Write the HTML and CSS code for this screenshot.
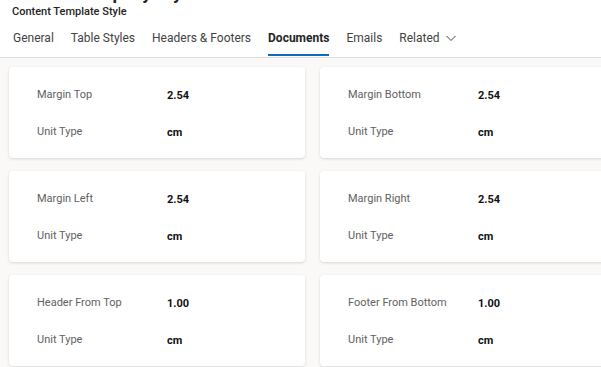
FILE: index.html
```html
<!DOCTYPE html>
<html lang="en">

<head>
    <meta charset="UTF-8">
    <meta name="viewport" content="width=device-width, initial-scale=1.0">
    <title>Content Template Style</title>
    <link rel="stylesheet" href="styles.css">
</head>

<body>
    <div class="page-header">
        <div class="title-clip">
            <h1 class="record-title">Default Company Style</h1>
        </div>
        <div class="record-type">Content Template Style</div>

        <nav class="tabs">
            <span class="tab">General</span>
            <span class="tab">Table Styles</span>
            <span class="tab">Headers &amp; Footers</span>
            <span class="tab active">Documents</span>
            <span class="tab">Emails</span>
            <span class="tab">Related
                <svg class="chevron" width="12" height="12" viewBox="0 0 12 12">
                    <path d="M1.5 4l4.5 4.5 4.5-4.5" fill="none" stroke="#424242" stroke-width="1"/>
                </svg>
            </span>
        </nav>
    </div>

    <div class="content">
        <div class="card-grid">
            <div class="card">
                <div class="field"><span class="label">Margin Top</span><span class="value">2.54</span></div>
                <div class="field"><span class="label">Unit Type</span><span class="value">cm</span></div>
            </div>
            <div class="card">
                <div class="field"><span class="label">Margin Bottom</span><span class="value">2.54</span></div>
                <div class="field"><span class="label">Unit Type</span><span class="value">cm</span></div>
            </div>
            <div class="card">
                <div class="field"><span class="label">Margin Left</span><span class="value">2.54</span></div>
                <div class="field"><span class="label">Unit Type</span><span class="value">cm</span></div>
            </div>
            <div class="card">
                <div class="field"><span class="label">Margin Right</span><span class="value">2.54</span></div>
                <div class="field"><span class="label">Unit Type</span><span class="value">cm</span></div>
            </div>
            <div class="card">
                <div class="field"><span class="label">Header From Top</span><span class="value">1.00</span></div>
                <div class="field"><span class="label">Unit Type</span><span class="value">cm</span></div>
            </div>
            <div class="card">
                <div class="field"><span class="label">Footer From Bottom</span><span class="value">1.00</span></div>
                <div class="field"><span class="label">Unit Type</span><span class="value">cm</span></div>
            </div>
        </div>
    </div>
</body>

</html>
```

FILE: styles.css
```css
/* General Body Styling */
body {
    font-family: 'Roboto', 'Noto Sans', sans-serif;
    margin: 0;
    padding: 0;
    background-color: #faf9f8;
    color: #242424;
    height: 367px;
    overflow: hidden;
}

.page-header {
    background-color: #ffffff;
    border-bottom: 1px solid #e1dfdd;
    padding: 0 12px;
    height: 57px;
}

/* only the bottom of the record title shows at the top edge */
.title-clip {
    height: 4px;
    overflow: hidden;
}

.record-title {
    font-size: 18px;
    font-weight: 700;
    line-height: 24px;
    margin: -19px 0 0 0;
}

.record-type {
    font-size: 11px;
    font-weight: 500;
    line-height: 16px;
}

/* Tabs */
.tabs {
    display: flex;
    gap: 17px;
    height: 37px;
    padding-left: 1px;
}

.tab {
    font-size: 12px;
    color: #424242;
    line-height: 20px;
    padding-top: 8px;
    position: relative;
    display: flex;
    align-items: flex-start;
    gap: 5px;
}

.tab.active {
    font-weight: 700;
    color: #242424;
}

.tab.active::after {
    content: '';
    position: absolute;
    left: 0;
    right: 0;
    bottom: 1px;
    height: 2px;
    background-color: #0f6cbd;
}

.chevron {
    margin-top: 4px;
}

/* Cards */
.content {
    padding: 9px 0 0 9px;
}

.card-grid {
    display: grid;
    grid-template-columns: 296px 296px;
    column-gap: 15px;
    row-gap: 13px;
}

.card {
    background-color: #ffffff;
    border-radius: 4px;
    box-shadow: 0 1px 3px rgba(0, 0, 0, 0.14);
    height: 91px;
    padding: 9px 0 0 28px;
    box-sizing: border-box;
}

.field {
    display: flex;
    align-items: center;
    height: 37px;
}

.label {
    width: 130px;
    font-size: 11px;
    color: #616161;
}

.value {
    font-size: 11px;
    font-weight: 700;
    color: #111111;
    margin-top: 2px;
}
```
